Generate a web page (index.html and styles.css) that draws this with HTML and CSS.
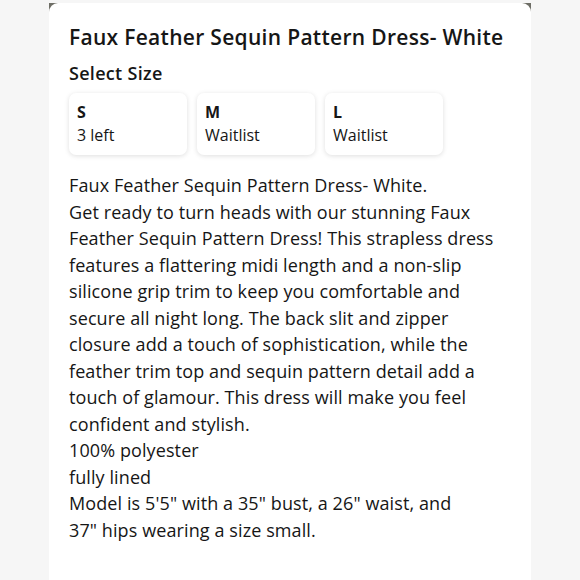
FILE: index.html
```html
<!DOCTYPE html>
<html>
<head>
<meta charset="utf-8">
<link rel="stylesheet" href="styles.css">
</head>
<body>
<div class="frame">
  <div class="card">
    <h1 class="title">Faux Feather Sequin Pattern Dress- White</h1>
    <h2 class="label">Select Size</h2>
    <div class="sizes">
      <div class="size"><span class="size-name">S</span><span class="size-stock">3 left</span></div>
      <div class="size"><span class="size-name">M</span><span class="size-stock">Waitlist</span></div>
      <div class="size"><span class="size-name">L</span><span class="size-stock">Waitlist</span></div>
    </div>
    <p class="desc">Faux Feather Sequin Pattern Dress- White.<br>Get ready to turn heads with our stunning Faux Feather Sequin Pattern Dress! This strapless dress features a flattering midi length and a non-slip silicone grip trim to keep you comfortable and secure all night long. The back slit and zipper closure add a touch of sophistication, while the feather trim top and sequin pattern detail add a touch of glamour. This dress will make you feel confident and stylish.<br>100% polyester<br>fully lined<br>Model is 5'5" with a 35" bust, a 26" waist, and<br>37" hips wearing a size small.</p>
  </div>
</div>
</body>
</html>
```
FILE: styles.css
```css
html, body {
  margin: 0;
  padding: 0;
  height: 100%;
}
body {
  background: #f6f6f6;
  font-family: "Open Sans", Lato, sans-serif;
  color: #161616;
  overflow: hidden;
}
.frame {
  margin: 3px 49px 0 49px;
  height: 577px;
  background: linear-gradient(#6e6e66 0, #6e6e66 10px, #ffffff 10px);
}
.card {
  background: #ffffff;
  height: 100%;
  border-radius: 9px 9px 0 0;
  padding: 20px 20px 0 20px;
  box-sizing: border-box;
}
.title {
  margin: 0;
  font-size: 21px;
  font-weight: 600;
  letter-spacing: 0.3px;
  line-height: 28px;
}
.label {
  margin: 10px 0 0 0;
  font-size: 18px;
  font-weight: 600;
  letter-spacing: 0.3px;
  line-height: 24px;
}
.sizes {
  display: flex;
  gap: 10px;
  margin-top: 8px;
}
.size {
  width: 118px;
  height: 62px;
  box-sizing: border-box;
  padding: 9px 8px;
  border-radius: 7px;
  background: #fff;
  box-shadow: 0 1px 5px rgba(0,0,0,0.13);
  display: flex;
  flex-direction: column;
}
.size-name {
  font-size: 16px;
  font-weight: 700;
  line-height: 21px;
}
.size-stock {
  font-size: 16px;
  line-height: 24px;
}
.desc {
  margin: 17px 0 0 0;
  font-size: 18px;
  letter-spacing: 0.1px;
  line-height: 26.5px;
}
```
